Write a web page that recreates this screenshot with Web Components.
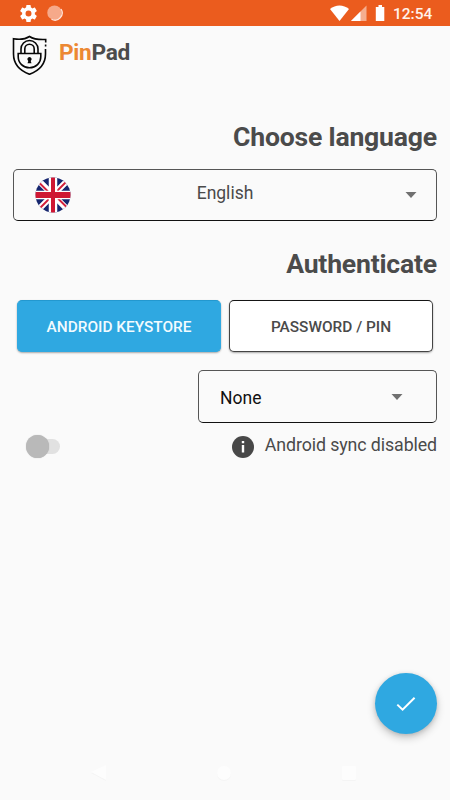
<!DOCTYPE html>
<html lang="en">
<head>
<meta charset="utf-8">
<title>PinPad</title>
<style>
body{margin:0;background:#fafafa;font-family:Roboto,"Liberation Sans",sans-serif;color:#4a4a4a}
</style>
</head>
<body>
<pin-app></pin-app>
<script>
const define = (name, html) => customElements.define(name, class extends HTMLElement {
  constructor() {
    super();
    const t = document.createElement('template');
    t.innerHTML = html;
    this.attachShadow({mode: 'open'}).append(t.content.cloneNode(true));
  }
});

define('status-bar', `<style>
:host{display:flex;align-items:center;height:26px;background:#eb5c1e;color:#fff;padding:0 18px 0 20px;box-sizing:border-box}
svg{display:block;flex:none}
.fill{flex:1}
.time{font-size:15.500px;line-height:26px;font-weight:500;padding-top:2px;color:#fff2ea;width:39px;white-space:nowrap}
</style>
<svg width="17" height="17" viewBox="2 2 20 20"><path fill="#fff" d="M19.43 12.98c.04-.32.07-.64.07-.98s-.03-.66-.07-.98l2.11-1.65c.19-.15.24-.42.12-.64l-2-3.46c-.12-.22-.39-.3-.61-.22l-2.49 1c-.52-.4-1.08-.73-1.69-.98l-.38-2.65A.49.49 0 0 0 14 2h-4c-.25 0-.46.18-.49.42l-.38 2.65c-.61.25-1.17.59-1.69.98l-2.49-1c-.23-.09-.49 0-.61.22l-2 3.46c-.13.22-.07.49.12.64l2.11 1.65c-.04.32-.07.65-.07.98s.03.66.07.98l-2.11 1.65c-.19.15-.24.42-.12.64l2 3.46c.12.22.39.3.61.22l2.49-1c.52.4 1.08.73 1.69.98l.38 2.65c.03.24.24.42.49.42h4c.25 0 .46-.18.49-.42l.38-2.65c.61-.25 1.17-.59 1.69-.98l2.49 1c.23.09.49 0 .61-.22l2-3.46c.12-.22.07-.49-.12-.64l-2.11-1.65zM12 15.5a3.5 3.5 0 1 1 0-7 3.5 3.5 0 0 1 0 7z"/></svg>
<svg width="16" height="16" viewBox="0 0 16 16" style="margin-left:10px"><circle cx="7.500" cy="7.700" r="7.200" fill="#f6a98a"/><path d="M14 4A7.200 7.200 0 0 1 4.500 14.200" fill="none" stroke="#ffe6dc" stroke-width="1.300"/></svg>
<span class="fill"></span>
<svg width="56" height="18" viewBox="0 0 56 18"><path fill="#fff" d="M0 5C5.500.3 13.500.3 19 5L9.500 17z"/><path fill="#f5ad8e" d="M36.500 1.500V17H21z"/><path fill="#fff" d="M30.500 7.500V17H21z"/><path fill="#fff" d="M48.500 1H52v2h2.300v14h-8.500V3h2.700z"/></svg>
<span class="time" style="margin-left:7px">12:54</span>`);

define('brand-mark', `<style>
:host{display:flex;align-items:center;height:41px;margin-top:8px;padding-left:12px}
b{font-size:22.700px;letter-spacing:-.3px;line-height:26px;margin:-3px 0 0 12px;color:#4c4c4c}
i{font-style:normal;color:#ec8833}
svg{display:block}
</style>
<svg width="35" height="41" viewBox="0 0 35 41" fill="none" stroke="#080808" stroke-width="1.600">
<path d="M33.700 8.500V5.500C27.500 5.800 22 5.500 17.500 2.500 13 5.500 7.500 5.800 1.500 4.800V20c0 10 6.800 16.800 16 20.300 9.200-3.500 16-10.300 16-20.300v-5"/><path d="M33.600 10.500v2"/>
<path d="M6.200 19.500h22.600v3.200c0 6.300-5 11-11.300 11s-11.300-4.700-11.300-11z"/>
<path d="M9 19.500V15a8.500 8.500 0 0 1 17 0v4.500M12.800 19.500V15a4.700 4.700 0 0 1 9.400 0v4.500"/>
<path d="M17.500 23a2.200 2.200 0 0 0-1.200 4l-.8 2.200h4l-.8-2.200a2.200 2.200 0 0 0-1.200-4z" fill="#080808" stroke="none"/></svg>
<b><i>Pin</i>Pad</b>`);

define('section-title', `<style>
:host{display:block;text-align:right;font-weight:700;font-size:26.600px;letter-spacing:-.2px;line-height:34px;color:#4b4b4b}
</style><slot></slot>`);

define('select-box', `<style>
:host{display:flex;align-items:center;height:52px;box-sizing:border-box;border:1px solid #555;border-bottom-color:#111;border-radius:5px;background:#fafafa}
.label{flex:1}
svg{display:block;flex:none;margin-right:var(--arrow-gap,20px)}
</style>
<slot name="icon"></slot><span class="label"><slot></slot></span>
<svg width="12" height="6" viewBox="0 0 12 6"><path d="M.5 0h11L6 6z" fill="#707070"/></svg>`);

define('uk-flag', `<style>:host{display:block;width:36px;height:36px;flex:none}svg{display:block}</style>
<svg width="36" height="36" viewBox="0 0 36 36"><defs><clipPath id="c"><circle cx="18" cy="18" r="17.500"/></clipPath></defs>
<g clip-path="url(#c)"><path fill="#16266f" d="M0 0h36v36H0z"/>
<path d="M0 0l36 36M36 0L0 36" stroke="#fff" stroke-width="6"/>
<path d="M3 4.500L17 18.500M33 3L19 17M33 31.500L19 17.500M3 33L17 19" stroke="#d2203c" stroke-width="1.900"/>
<path d="M18 0v36M0 18h36" stroke="#fff" stroke-width="8.500"/>
<path d="M18 0v36" stroke="#cf1733" stroke-width="4"/><path d="M0 18h36" stroke="#cf1733" stroke-width="6"/></g></svg>`);

define('choice-button', `<style>
:host{display:flex;align-items:center;justify-content:center;height:52px;box-sizing:border-box;border-radius:5px;font-weight:500;font-size:15.400px;white-space:nowrap;color:#4a4a4a;background:#fff;border:1px solid #444;border-top-color:#151515;box-shadow:0 1px 2px #0005}
:host([active]){background:#2fa8e1;color:#f2fbff;border-color:#2fa8e1;border-top-color:#2398cf}
span{padding-top:1px}
</style><span><slot></slot></span>`);

define('toggle-switch', `<style>
:host{display:flex;align-items:center;width:35px;height:24px}
.knob{width:23px;height:23px;border-radius:50%;background:#b9b9b9;box-shadow:0 0 1px #0004;flex:none;z-index:1}
.track{width:23px;height:15px;border-radius:0 8px 8px 0;background:#e1e1e1;margin-left:-12px}
</style><span class="knob"></span><span class="track"></span>`);

define('info-note', `<style>
:host{display:flex;align-items:center;gap:11px;font-size:17.800px;letter-spacing:-.1px;line-height:24px;color:#4a4a4a;white-space:nowrap}
svg{display:block;margin-top:4px}
</style>
<svg width="22" height="22" viewBox="0 0 22 22"><circle cx="11" cy="11" r="11" fill="#484848"/><path d="M9.800 5h2.400v2.300H9.800zM9.800 9h2.400v7.500H9.800z" fill="#fff"/></svg><span><slot></slot></span>`);

define('confirm-fab', `<style>
:host{position:absolute;left:375px;top:673px;width:62px;height:61px;border-radius:50%;background:#2fa8e1;box-shadow:0 4px 8px #0003,0 1px 4px #0002;display:grid;place-items:center}
</style><svg width="20" height="16" viewBox="0 0 20 16"><path d="M1.300 8.600l5.300 5.100L18.600 1.800" fill="none" stroke="#fff" stroke-width="2"/></svg>`);

define('nav-bar', `<style>
:host{display:flex;justify-content:space-between;padding:0 92px 0 91px;position:absolute;left:0;right:0;bottom:18px}
svg{display:block}
</style>
<svg width="17" height="17"><path d="M0 8L15 1v15z" fill="#f4f4f4"/><path d="M0 7L15 0v15z" fill="#fdfdfd"/></svg>
<svg width="17" height="17"><circle cx="8" cy="9" r="7" fill="#f4f4f4"/><circle cx="8" cy="8" r="7" fill="#fdfdfd"/></svg>
<svg width="17" height="17"><rect x="1" y="2" width="14" height="14" rx="1" fill="#f4f4f4"/><rect x="1" y="1" width="14" height="14" rx="1" fill="#fdfdfd"/></svg>`);

define('pin-app', `<style>
:host{display:block;position:relative;height:800px;overflow:hidden}
main{padding:0 13px 0 13px}
.lang{margin-top:15px;font-size:17.500px;--arrow-gap:19px;color:#4a4a4a}
.en{display:block;text-align:center;margin:-5px 26px 0 0;line-height:24px}
uk-flag{margin-left:21px}
.first{margin-top:45px}
.second{margin-top:26px}
.buttons{display:grid;grid-template-columns:204px 204px;gap:8px;margin:19px 4px 0}
.auth{width:239px;height:53px;margin:18px 0 0 auto;font-size:17.500px;--arrow-gap:33px;color:#111}
.auth span{display:block;padding-left:21px;margin-top:2px}
.sync{display:flex;justify-content:space-between;align-items:center;margin-top:11px;padding-left:13px}
info-note{margin-top:-3px}
</style>
<status-bar></status-bar>
<brand-mark></brand-mark>
<main>
<section-title class="first">Choose language</section-title>
<select-box class="lang"><uk-flag slot="icon"></uk-flag><span class="en">English</span></select-box>
<section-title class="second">Authenticate</section-title>
<div class="buttons"><choice-button active>ANDROID KEYSTORE</choice-button><choice-button>PASSWORD / PIN</choice-button></div>
<select-box class="auth"><span>None</span></select-box>
<div class="sync"><toggle-switch></toggle-switch><info-note>Android sync disabled</info-note></div>
</main>
<confirm-fab></confirm-fab>
<nav-bar></nav-bar>`);
</script>
</body>
</html>
